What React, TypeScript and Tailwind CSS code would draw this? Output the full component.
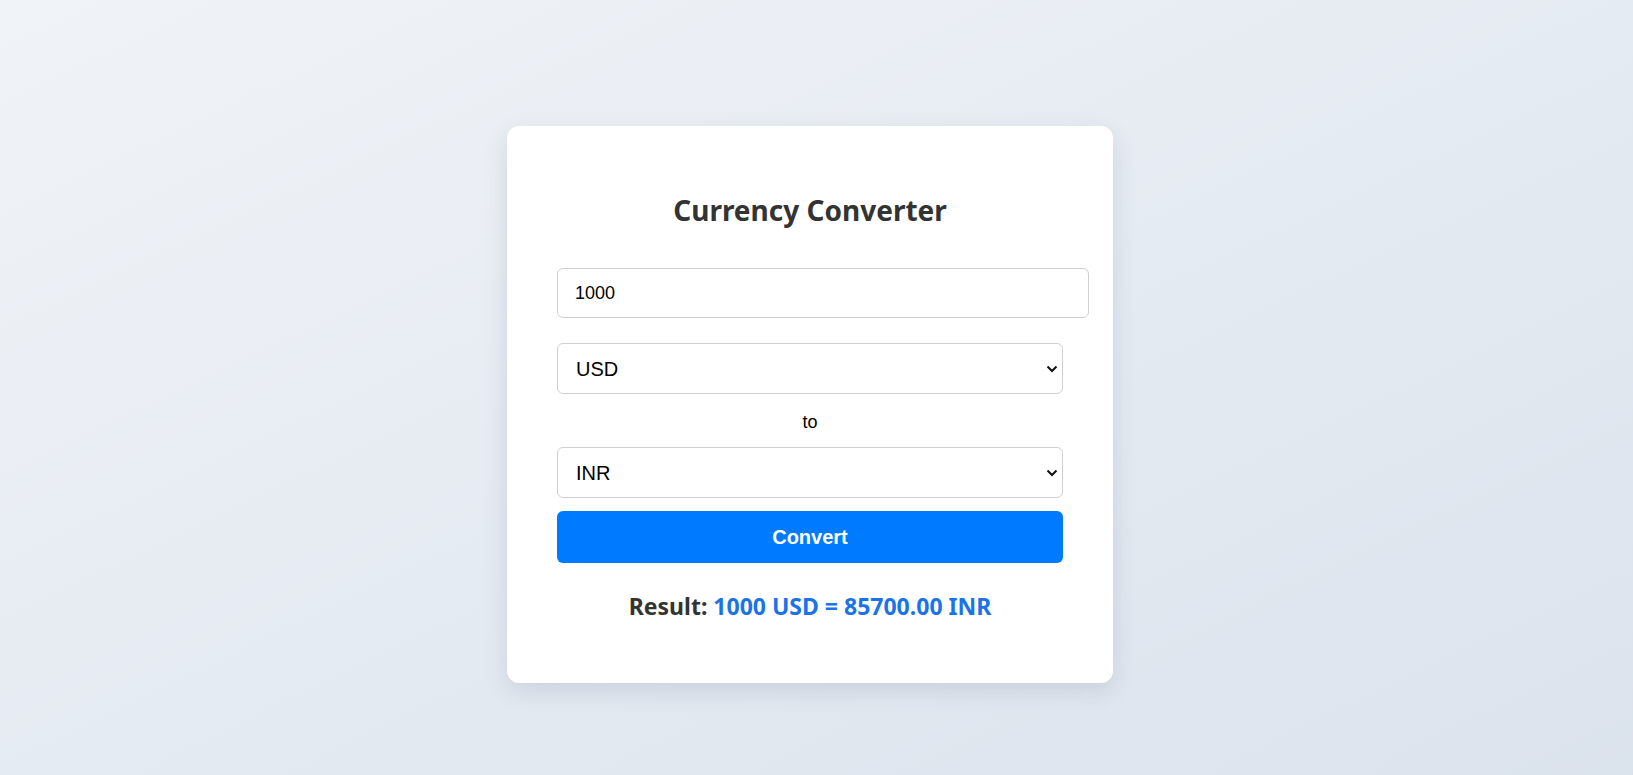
import React, { useState } from "react";

const Chevron = () => (
	<svg
		className="pointer-events-none absolute right-[5px] top-1/2 -translate-y-1/2"
		width="12"
		height="8"
		viewBox="0 0 12 8"
		fill="none"
	>
		<path d="M1.5 1.5 L6 6 L10.5 1.5" stroke="#111" strokeWidth="2" />
	</svg>
);

const CurrencySelect = ({ value, onChange }: { value: string; onChange: (v: string) => void }) => {
	return (
		<div className="relative w-full">
			<select
				value={value}
				onChange={(e) => onChange(e.target.value)}
				className="block w-full h-[51px] appearance-none bg-white border border-[#d0d0d0] rounded-[6px] pl-[18px] pr-8 text-[20px] text-black outline-none font-['Liberation_Sans',Arial,sans-serif]"
			>
				<option>USD</option>
				<option>INR</option>
				<option>EUR</option>
				<option>GBP</option>
				<option>JPY</option>
			</select>
			<Chevron />
		</div>
	);
};

const App = () => {
	const [amount, setAmount] = useState("1000");
	const [from, setFrom] = useState("USD");
	const [to, setTo] = useState("INR");

	return (
		<div className="min-h-screen w-full bg-linear-to-br from-[#f0f3f7] to-[#dbe3ed] flex justify-center items-start pt-[126px] pr-[13px] font-['Noto_Sans',sans-serif]">
			<div className="w-[606px] h-[557px] bg-white rounded-[12px] shadow-[0_8px_24px_rgba(30,50,80,0.12)] px-[50px] pt-[67px] flex flex-col">
				<h2 className="text-[28px] leading-[34px] font-bold text-[#333] text-center">
					Currency Converter
				</h2>

				<input
					type="number"
					value={amount}
					onChange={(e) => setAmount(e.target.value)}
					className="mt-[41px] w-[532px] h-[50px] border border-[#d0d0d0] rounded-[6px] px-[17px] text-[18px] text-black outline-none font-['Liberation_Sans',Arial,sans-serif] [appearance:textfield]"
				/>

				<div className="mt-[25px]">
					<CurrencySelect value={from} onChange={setFrom} />
				</div>

				<p className="mt-[17px] h-[22px] leading-[22px] text-center text-[18px] text-black font-['Liberation_Sans',Arial,sans-serif]">
					to
				</p>

				<div className="mt-[14px]">
					<CurrencySelect value={to} onChange={setTo} />
				</div>

				<button className="mt-[13px] w-full h-[52px] bg-[#007bff] rounded-[6px] text-white text-[20px] font-bold font-['Liberation_Sans',Arial,sans-serif]">
					Convert
				</button>

				<p className="mt-[28px] text-center text-[23px] leading-[30px] font-bold text-[#333]">
					Result: <span className="text-[#1a73e8]">1000 USD = 85700.00 INR</span>
				</p>
			</div>
		</div>
	);
};

export default App;
